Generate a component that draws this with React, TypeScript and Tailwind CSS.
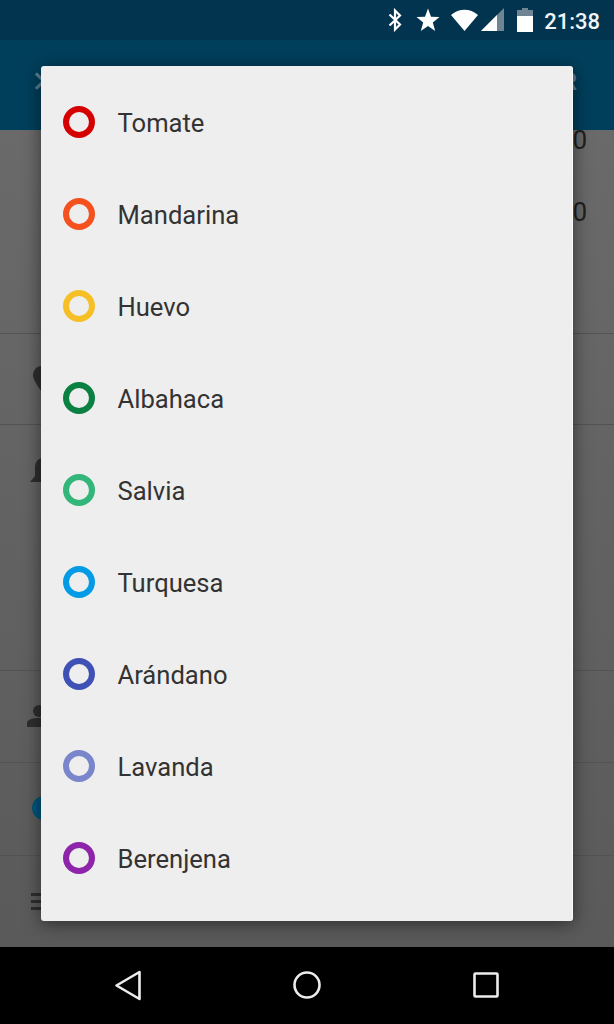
const colors = [
  { name: 'Tomate', color: 'border-[#d50000]' },
  { name: 'Mandarina', color: 'border-[#f4511e]' },
  { name: 'Huevo', color: 'border-[#f6bf26]' },
  { name: 'Albahaca', color: 'border-[#0b8043]' },
  { name: 'Salvia', color: 'border-[#33b679]' },
  { name: 'Turquesa', color: 'border-[#039be5]' },
  { name: 'Arándano', color: 'border-[#3f51b5]' },
  { name: 'Lavanda', color: 'border-[#7986cb]' },
  { name: 'Berenjena', color: 'border-[#8e24aa]' },
];

function StatusBar() {
  return (
    <div className="h-10 bg-[#02344f] flex items-center justify-end pr-[14px] shrink-0">
      {/* bluetooth */}
      <svg width="16" height="24" viewBox="0 0 16 24" className="mr-[13px]">
        <path d="M2.500 6.500 L13 16.500 L8 21.500 V2.500 L13 7.500 L2.500 17.500" fill="none" stroke="white" strokeWidth="2.200" />
      </svg>
      {/* star */}
      <svg width="24" height="24" viewBox="0 0 24 24" className="mr-[11px]">
        <path d="M12 0.500 L15 8.800 L23.500 9 L16.800 14.500 L19.200 23 L12 18 L4.800 23 L7.200 14.500 L0.500 9 L9 8.800 Z" fill="white" />
      </svg>
      {/* wifi */}
      <svg width="27" height="24" viewBox="0 0 27 24" className="mr-[3px]">
        <path d="M0 7 C8 0 19 0 27 7 L13.500 23 Z" fill="white" />
      </svg>
      {/* signal */}
      <svg width="23" height="24" viewBox="0 0 23 24" className="mr-[13px]">
        <path d="M0 23 L23 0 V23 Z" fill="#6f8593" />
        <path d="M0 23 L16 7 V23 Z" fill="white" />
      </svg>
      {/* battery */}
      <svg width="16" height="24" viewBox="0 0 16 24" className="mr-[11px]">
        <path d="M5 0 H11 V2 H16 V24 H0 V2 H5 Z" fill="#6f8593" />
        <rect x="0" y="8" width="16" height="16" fill="white" />
      </svg>
      <span className="font-['Roboto',sans-serif] font-medium text-[22px] pt-[2px] text-[#f2f5f7]">21:38</span>
    </div>
  );
}

function AppBar() {
  return (
    <div className="h-[90px] bg-[#003f5c] shrink-0 flex items-center justify-between pl-[31px] pr-[37px] pb-[6px]">
      <span className="font-['Roboto',sans-serif] text-[30px] leading-none text-[#5f7f8f]">✕</span>
      <span className="font-['Roboto',sans-serif] font-medium text-[24px] leading-none text-[#5f7f8f]">R</span>
    </div>
  );
}

function Background() {
  return (
    <div className="flex-1 bg-linear-to-b from-[#6a6a6a] to-[#5a5a5a] flex flex-col font-['Roboto',sans-serif] text-[#1f1f1f] text-[26px] leading-none min-h-0">
      <div className="h-[204px] border-b border-[#535353] pr-[27px] flex flex-col items-end gap-[44px]">
        <span className="h-7 leading-7 -mt-1">0</span>
        <span className="h-7 leading-7">0</span>
      </div>
      <div className="h-[91px] border-b border-[#535353] pl-[33px] flex items-center">
        <svg width="18" height="28" viewBox="0 0 18 28">
          <path d="M9 1 C3 1 0 6 0 10 C0 16 9 27 9 27 S18 16 18 10 C18 6 15 1 9 1 Z" fill="#2e2e2e" />
        </svg>
      </div>
      <div className="h-[246px] border-b border-[#535353] pl-[30px] pt-[33px]">
        <svg width="24" height="24" viewBox="0 0 24 24">
          <path d="M12 0 C7 1 5 5 5 10 V18 L0 24 H24 V0 Z" fill="#2e2e2e" />
        </svg>
      </div>
      <div className="h-[92px] border-b border-[#535353] pl-[27px] pt-[33px]">
        <svg width="24" height="24" viewBox="0 0 24 24">
          <circle cx="12" cy="7" r="6" fill="#2e2e2e" />
          <path d="M0 23 V19 C0 15 7 14 12 14 S24 15 24 19 V23 Z" fill="#2e2e2e" />
        </svg>
      </div>
      <div className="h-[93px] border-b border-[#535353] pl-[32px] pt-[33px]">
        <div className="w-6 h-6 rounded-full bg-[#00557a]" />
      </div>
      <div className="flex-1 pl-[31px] pt-[37px]">
        <div className="w-6 flex flex-col gap-[4px]">
          <div className="h-[3px] bg-[#2e2e2e]" />
          <div className="h-[3px] bg-[#2e2e2e]" />
          <div className="h-[3px] bg-[#2e2e2e]" />
        </div>
      </div>
    </div>
  );
}

function NavBar() {
  return (
    <div className="h-[77px] bg-black shrink-0 flex items-center pl-[112px] pb-[1px]">
      <svg width="32" height="34" viewBox="0 0 32 34" className="mr-[147px]">
        <path d="M27.500 4 V31 L4.500 17.500 Z" fill="none" stroke="#ececec" strokeWidth="2.600" strokeLinejoin="round" />
      </svg>
      <svg width="32" height="32" viewBox="0 0 32 32" className="mr-[149px]">
        <circle cx="16" cy="16" r="12.500" fill="none" stroke="#ececec" strokeWidth="2.600" />
      </svg>
      <svg width="28" height="28" viewBox="0 0 28 28">
        <rect x="2.500" y="2.500" width="23" height="23" rx="1" fill="none" stroke="#ececec" strokeWidth="2.600" />
      </svg>
    </div>
  );
}

export default function App() {
  return (
    <div className="relative w-[614px] h-[1024px] flex flex-col overflow-hidden">
      <StatusBar />
      <AppBar />
      <Background />
      <NavBar />

      <div className="absolute left-[41px] top-[66px] w-[532px] h-[855px] bg-[#eeeeee] rounded-[3px] border-r border-[#fafafa] shadow-[0_3px_18px_rgba(0,0,0,0.5)] pt-[10px]">
        {colors.map((c) => (
          <div key={c.name} className="h-[92px] flex items-center pl-[22px]">
            <div className={`w-8 h-8 rounded-full border-[6px] ${c.color}`} />
            <span className="ml-[22.5px] mt-[2px] font-['Roboto',sans-serif] text-[25.6px] text-[#333333]">{c.name}</span>
          </div>
        ))}
      </div>
    </div>
  );
}
